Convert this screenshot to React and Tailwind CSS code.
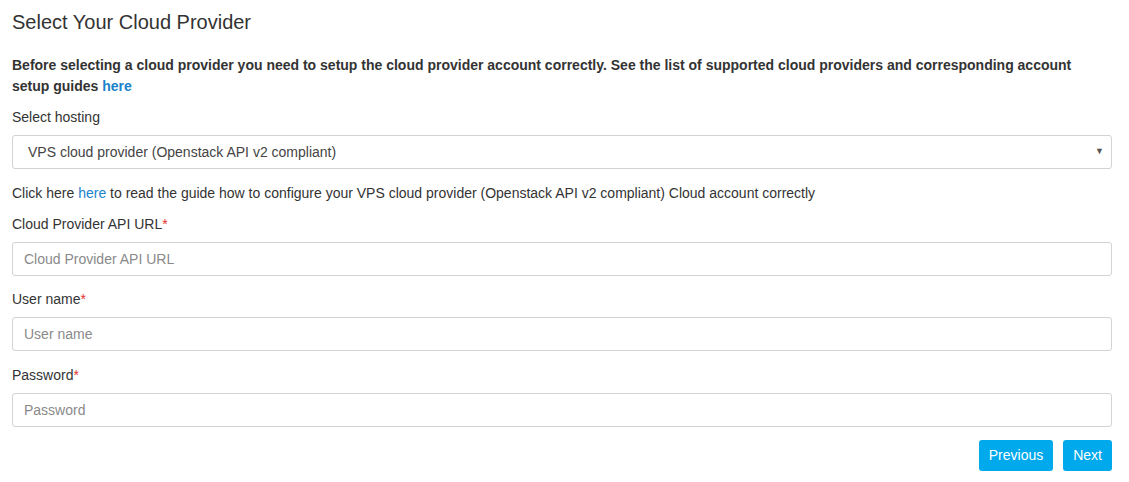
import React from "react";

function Field({ label, placeholder, type = "text", top = "mt-[13px]" }) {
  return (
    <div className={top}>
      <label className="block leading-[21px]">
        {label}
        <span className="text-[#e4312b]">*</span>
      </label>
      <input
        type={type}
        placeholder={placeholder}
        className="mt-[7px] block w-full h-[34px] px-[11px] border border-[#d3d3d3] rounded-[3px] bg-white text-[14px] text-[#555] placeholder:text-[#8a8a8a] outline-none"
      />
    </div>
  );
}

function App() {
  return (
    <div
      className="bg-white min-h-[482px] pl-[12px] pr-[17px] pt-[9px] text-[14px] text-[#333]"
      style={{ fontFamily: '"Liberation Sans", Arial, sans-serif' }}
    >
      <h1 className="text-[20px] leading-[26px] font-normal">
        Select Your Cloud Provider
      </h1>

      <p className="mt-[20px] font-bold leading-[21px]">
        Before selecting a cloud provider you need to setup the cloud provider
        account correctly. See the list of supported cloud providers and
        corresponding account setup guides{" "}
        <a href="#" className="text-[#1a82c9]">
          here
        </a>
      </p>

      <label className="block mt-[10px] leading-[21px]">Select hosting</label>
      <div className="relative mt-[7px]">
        <select className="appearance-none block w-full h-[34px] pl-[15px] pr-8 border border-[#d3d3d3] rounded-[3px] bg-white text-[14px] text-[#444] outline-none">
          <option>VPS cloud provider (Openstack API v2 compliant)</option>
        </select>
        <span className="pointer-events-none absolute right-[8px] top-[12px] text-[#555] text-[9px] leading-none">
          ▼
        </span>
      </div>

      <p className="mt-[14px] leading-[21px]">
        Click here{" "}
        <a href="#" className="text-[#1a82c9]">
          here
        </a>{" "}
        to read the guide how to configure your VPS cloud provider (Openstack
        API v2 compliant) Cloud account correctly
      </p>

      <Field
        label="Cloud Provider API URL"
        placeholder="Cloud Provider API URL"
        top="mt-[10px]"
      />
      <Field label="User name" placeholder="User name" />
      <Field
        label="Password"
        placeholder="Password"
        type="password"
        top="mt-[14px]"
      />

      <div className="flex justify-end gap-[10px] mt-[13px]">
        <button className="h-[31px] px-[10px] rounded-[3px] bg-[#00a8ec] text-white text-[14px]">
          Previous
        </button>
        <button className="h-[31px] px-[10px] rounded-[3px] bg-[#00a8ec] text-white text-[14px]">
          Next
        </button>
      </div>
    </div>
  );
}

export default App;
